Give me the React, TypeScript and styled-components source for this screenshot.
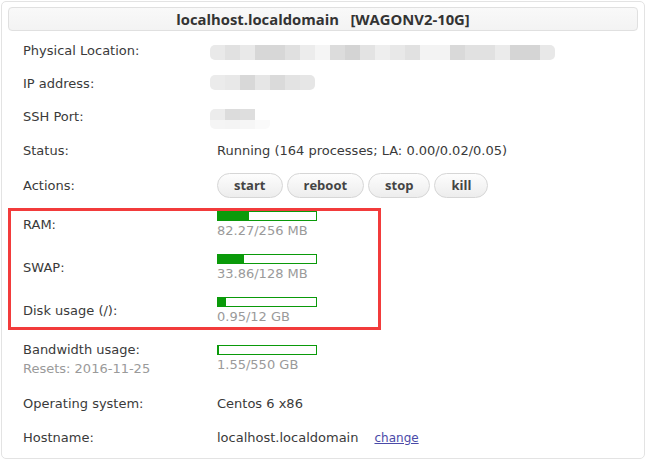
import React from "react";
import styled, { createGlobalStyle } from "styled-components";

const GlobalStyle = createGlobalStyle`
  body {
    margin: 0;
    background: #fff;
    font-family: "DejaVu Sans", Verdana, sans-serif;
    font-size: 13px;
    color: #3a3a3a;
  }
`;

const Card = styled.div`
  box-sizing: border-box;
  width: 644px;
  height: 458px;
  margin: 1px 0 0 1px;
  padding: 5px 6px 0;
  border: 1px solid #e3e3e3;
  border-radius: 5px;
`;

const TitleBar = styled.div`
  box-sizing: border-box;
  height: 24px;
  margin-bottom: 3px;
  display: flex;
  align-items: center;
  justify-content: center;
  background: linear-gradient(#f9f9f9, #f3f3f3);
  border: 1px solid #e0e0e0;
  border-radius: 4px;
  font-family: "Open Sans", "DejaVu Sans", sans-serif;
  font-weight: 700;
  font-size: 14.8px;
  color: #333;
  white-space: pre;
`;

const Row = styled.div<{ $h?: number }>`
  display: flex;
  align-items: center;
  height: ${(p) => p.$h ?? 33}px;
  padding-left: 15px;
`;

const Label = styled.div`
  width: 194px;
  flex-shrink: 0;
  line-height: 19px;
`;

const Muted = styled.div`
  color: #9a9a9a;
`;

const Value = styled.div`
  display: flex;
  align-items: center;
`;

const Actions = styled.div`
  display: flex;
  gap: 4px;
`;

const ActionButton = styled.button`
  box-sizing: border-box;
  height: 25px;
  padding: 0 16px;
  border: 1px solid #d6d6d6;
  border-radius: 13px;
  background: linear-gradient(#fdfdfd, #ededed);
  font-family: "Open Sans", "DejaVu Sans", sans-serif;
  font-weight: 700;
  font-size: 13px;
  color: #444;
  cursor: pointer;
`;

const Highlight = styled.div`
  position: relative;

  &::after {
    content: "";
    position: absolute;
    top: 5px;
    bottom: 2px;
    left: 0;
    width: 373px;
    box-sizing: border-box;
    border: 3px solid #f23b3b;
    pointer-events: none;
  }
`;

const Meter = styled.div`
  display: flex;
  flex-direction: column;
`;

const Bar = styled.div`
  box-sizing: border-box;
  width: 100px;
  height: 10px;
  margin-bottom: 2px;
  border: 1px solid #0a9a0a;
  background: #fff;
`;

const Fill = styled.div`
  height: 100%;
  background: #0a9a0a;
`;

const MeterText = styled.div`
  line-height: 16px;
  color: #9a9a9a;
`;

const Blur = styled.svg<{ $top: number }>`
  display: block;
  align-self: flex-start;
  margin: ${(p) => p.$top}px 0 0 -7px;
  overflow: visible;
`;

const ChangeLink = styled.a`
  margin-left: 16px;
  font-size: 12px;
  color: #4a4aa8;
  text-decoration: underline;
`;

function Mosaic({ rows, top }: { rows: { h: number; cells: string[] }[]; top: number }) {
  const width = Math.max(...rows.map((r) => r.cells.length)) * 15;
  const height = rows.reduce((s, r) => s + r.h, 0);
  const clipId = `clip-${top}-${width}`;
  let y = 0;
  return (
    <Blur $top={top} width={width} height={height}>
      <defs>
        <clipPath id={clipId}>
          <rect x={0} y={0} width={width} height={height} rx={5} />
        </clipPath>
      </defs>
      <g clipPath={`url(#${clipId})`}>
        {rows.map((r, ri) => {
          const y0 = y;
          y += r.h;
          return r.cells.map((c, i) => (
            <rect key={`${ri}-${i}`} x={i * 15} y={y0} width={15} height={r.h} fill={c} />
          ));
        })}
      </g>
    </Blur>
  );
}

function UsageMeter({ used, total, unit }: { used: number; total: number; unit: string }) {
  return (
    <Meter>
      <Bar>
        <Fill style={{ width: `${(used / total) * 100}%` }} />
      </Bar>
      <MeterText>
        {used.toFixed(2)}/{total} {unit}
      </MeterText>
    </Meter>
  );
}

const locationCells = [
  "#e9e9e9", "#e1e1e1", "#e9e9e9", "#d7d7d7", "#d7d7d7", "#e0e0e0", "#ececec", "#f5f5f5",
  "#dcdcdc", "#d4d4d4", "#e3e3e3", "#eeeeee", "#e8e8e8", "#e1e1e1", "#f3f3f3", "#f3f3f3",
  "#d9d9d9", "#e1e1e1", "#e1e1e1", "#ebebeb", "#d5d5d5", "#d5d5d5", "#e8e8e8",
];
const ipCells = ["#ebebeb", "#e8e8e8", "#d8d8d8", "#e6e6e6", "#dadada", "#e3e3e3", "#e6e6e6"];

export default function App() {
  return (
    <>
      <GlobalStyle />
      <Card>
        <TitleBar>{"localhost.localdomain   [WAGONV2-10G]"}</TitleBar>
        <Row>
          <Label>Physical Location:</Label>
          <Mosaic top={11} rows={[{ h: 15, cells: locationCells }]} />
        </Row>
        <Row>
          <Label>IP address:</Label>
          <Mosaic top={8} rows={[{ h: 15, cells: ipCells }]} />
        </Row>
        <Row>
          <Label>SSH Port:</Label>
          <Mosaic
            top={9}
            rows={[
              { h: 11, cells: ["#ececec", "#dcdcdc", "#dedede", "#ffffff"] },
              { h: 9, cells: ["#f5f5f5", "#f4f4f4", "#f6f6f6", "#fafafa"] },
            ]}
          />
        </Row>
        <Row $h={34}>
          <Label>Status:</Label>
          <Value>Running (164 processes; LA: 0.00/0.02/0.05)</Value>
        </Row>
        <Row $h={36}>
          <Label>Actions:</Label>
          <Actions>
            <ActionButton>start</ActionButton>
            <ActionButton>reboot</ActionButton>
            <ActionButton>stop</ActionButton>
            <ActionButton>kill</ActionButton>
          </Actions>
        </Row>
        <Highlight>
          <Row $h={43}>
            <Label>RAM:</Label>
            <UsageMeter used={82.27} total={256} unit="MB" />
          </Row>
          <Row $h={43}>
            <Label>SWAP:</Label>
            <UsageMeter used={33.86} total={128} unit="MB" />
          </Row>
          <Row $h={43}>
            <Label>Disk usage (/):</Label>
            <UsageMeter used={0.95} total={12} unit="GB" />
          </Row>
        </Highlight>
        <Row $h={54}>
          <Label>
            Bandwidth usage:
            <Muted>Resets: 2016-11-25</Muted>
          </Label>
          <UsageMeter used={1.55} total={550} unit="GB" />
        </Row>
        <Row $h={34}>
          <Label>Operating system:</Label>
          <Value>Centos 6 x86</Value>
        </Row>
        <Row $h={35}>
          <Label>Hostname:</Label>
          <Value>
            localhost.localdomain
            <ChangeLink href="#">change</ChangeLink>
          </Value>
        </Row>
      </Card>
    </>
  );
}
